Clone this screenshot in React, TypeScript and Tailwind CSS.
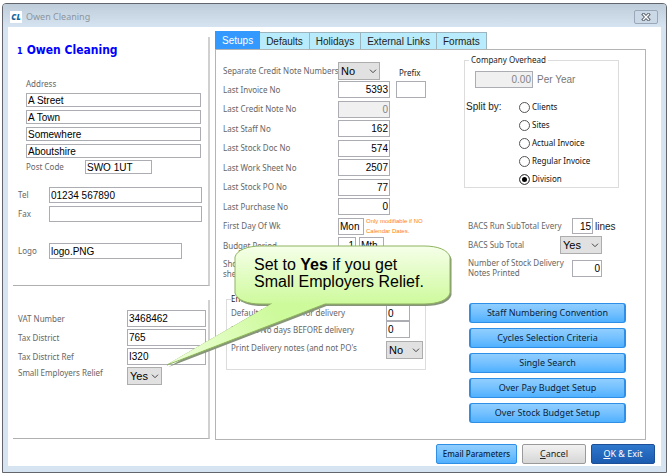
import type { ReactNode } from "react";

const labelCls = "text-[8px] leading-3 text-[#666]";
const boxCls =
  "min-w-0 border border-[#abadb3] bg-white px-px font-['Liberation_Sans',sans-serif] text-[10px] text-black outline-none disabled:bg-[#f0f0f0] disabled:text-[#838383]";
const arialCls = "font-['Liberation_Sans',sans-serif] text-[10px]";

const address = ["A Street", "A Town", "Somewhere", "Aboutshire"];

const tax = [
  { id: "vat", label: "VAT Number", value: "3468462" },
  { id: "district", label: "Tax District", value: "765" },
  { id: "districtRef", label: "Tax District Ref", value: "I320" },
];

const counters = [
  { id: "invoice", label: "Last Invoice No", value: "5393" },
  { id: "credit", label: "Last Credit Note No", value: "0", disabled: true },
  { id: "staff", label: "Last Staff No", value: "162" },
  { id: "stockDoc", label: "Last Stock Doc No", value: "574" },
  { id: "workSheet", label: "Last Work Sheet No", value: "2507" },
  { id: "stockPo", label: "Last Stock PO No", value: "77" },
  { id: "purchase", label: "Last Purchase No", value: "0" },
];

const tabs = ["Setups", "Defaults", "Holidays", "External Links", "Formats"];
const splits = ["Clients", "Sites", "Actual Invoice", "Regular Invoice", "Division"];
const actions = [
  "Staff Numbering Convention",
  "Cycles Selection Criteria",
  "Single Search",
  "Over Pay Budget Setup",
  "Over Stock Budget Setup",
];

function Picker({ id, value, className }: { id: string; value: string; className: string }) {
  return (
    <div className={`relative ${className}`}>
      <select
        id={id}
        defaultValue={value}
        className="block h-[18px] w-full appearance-none border border-[#adadad] bg-[#e1e1e1] pl-[2px] font-['Liberation_Sans',sans-serif] text-[11px] leading-4 text-black"
      >
        <option>Yes</option>
        <option>No</option>
      </select>
      <svg viewBox="0 0 8 5" className="pointer-events-none absolute right-[3px] top-[7px] h-[5px] w-2">
        <path d="M1 .7 4 3.7 7 .7" fill="none" stroke="#444" />
      </svg>
    </div>
  );
}

function Row({ id, label, children }: { id: string; label: string; children: ReactNode }) {
  return (
    <div className="flex items-center odd:h-[19px] even:h-5">
      <label htmlFor={id} className={`w-[115px] shrink-0 ${labelCls}`}>
        {label}
      </label>
      {children}
    </div>
  );
}

function TitleBar() {
  return (
    <header className="flex h-[23px] items-center justify-between bg-linear-to-b from-[#bfcddb] to-[#d6e4f2] pl-[7px] pr-2 pt-[3px]">
      <div className="flex items-center gap-1">
        <span className="flex h-3 w-3 items-center justify-center bg-white font-['Noto_Sans',sans-serif] text-[8px] font-black italic leading-3 text-[#15679c]">
          CL
        </span>
        <h1 className="text-[9px] text-[#8d959d]">Owen Cleaning</h1>
      </div>
      <button
        aria-label="Close"
        className="flex h-[14px] w-6 items-center justify-center rounded-[2px] border border-[#9aa7b8] bg-[#cbd8e6]"
      >
        <svg viewBox="0 0 10 8" className="h-2 w-[10px]">
          <path d="M2.5 1.5 7.5 6.5M7.5 1.5 2.5 6.5" stroke="#5c6470" strokeWidth="3.2" strokeLinecap="square" />
          <path d="M2.5 1.5 7.5 6.5M7.5 1.5 2.5 6.5" stroke="#fff" strokeWidth="1.3" strokeLinecap="square" />
        </svg>
      </button>
    </header>
  );
}

function CompanyPanel() {
  return (
    <div className="w-[197px] shrink-0">
      <section className="h-[249px] border-b border-r-2 border-b-[#b0b0b0] border-r-[#d0d0d0] pt-[5px]">
        <h2 className="flex items-baseline gap-1 pl-1 font-['DejaVu_Sans_Condensed','DejaVu_Sans',sans-serif] text-[12px] font-bold leading-4 text-[#0000ff]">
          <span className="text-[9px]">1</span>Owen Cleaning
        </h2>

        <div className="mt-[19px] flex flex-col pl-[13px]">
          <label htmlFor="address0" className={labelCls}>
            Address
          </label>
          <div className="mt-[3px] flex flex-col gap-[3px] pr-[7px]">
            {address.map((line, i) => (
              <input
                key={line}
                id={`address${i}`}
                aria-label={`Address line ${i + 1}`}
                className={`h-[14px] ${boxCls}`}
                defaultValue={line}
              />
            ))}
          </div>
          <div className="mt-[2px] flex items-center">
            <label htmlFor="postcode" className={`w-[59px] ${labelCls}`}>
              Post Code
            </label>
            <input id="postcode" className={`h-[14px] w-[67px] ${boxCls}`} defaultValue="SWO 1UT" />
          </div>
        </div>

        <div className="mt-[13px] flex flex-col gap-[3px] pl-[5px] pr-[6px]">
          <div className="flex items-center">
            <label htmlFor="tel" className={`w-[31px] shrink-0 ${labelCls}`}>
              Tel
            </label>
            <input id="tel" className={`h-4 flex-1 ${boxCls}`} defaultValue="01234 567890" />
          </div>
          <div className="flex items-center">
            <label htmlFor="fax" className={`w-[31px] shrink-0 ${labelCls}`}>
              Fax
            </label>
            <input id="fax" className={`h-4 flex-1 ${boxCls}`} />
          </div>
          <div className="mt-[18px] flex items-center">
            <label htmlFor="logo" className={`w-[31px] shrink-0 ${labelCls}`}>
              Logo
            </label>
            <input id="logo" className={`h-4 w-[133px] ${boxCls}`} defaultValue="logo.PNG" />
          </div>
        </div>
      </section>

      <section className="mt-[14px] h-[139px] border-b border-r-2 border-b-[#b0b0b0] border-r-[#d0d0d0] pl-[5px] pr-[2px] pt-[10px]">
        <div className="flex flex-col gap-[2px]">
          {tax.map((t) => (
            <div key={t.id} className="flex items-center">
              <label htmlFor={t.id} className={`w-[109px] shrink-0 ${labelCls}`}>
                {t.label}
              </label>
              <input id={t.id} className={`h-[17px] w-[79px] ${boxCls}`} defaultValue={t.value} />
            </div>
          ))}
          <div className="flex items-start">
            <label htmlFor="relief" className={`w-[109px] shrink-0 ${labelCls}`}>
              Small Employers Relief
            </label>
            <Picker id="relief" value="Yes" className="w-[35px]" />
          </div>
        </div>
      </section>
    </div>
  );
}

function SetupsColumn() {
  return (
    <div className="w-[212px] shrink-0 pt-3">
      <div className="flex h-[18px] items-center">
        <label htmlFor="separate" className={`w-[115px] shrink-0 overflow-hidden whitespace-nowrap ${labelCls}`}>
          Separate Credit Note Numbers
        </label>
        <Picker id="separate" value="No" className="w-[42px]" />
        <label htmlFor="prefix" className="ml-[19px] pt-1 text-[8px] leading-3 text-[#222]">
          Prefix
        </label>
      </div>

      <div>
        {counters.map((c) => (
          <Row key={c.id} id={c.id} label={c.label}>
            <input
              id={c.id}
              className={`h-[17px] w-[52px] text-right ${boxCls}`}
              defaultValue={c.value}
              disabled={c.disabled}
            />
            {c.id === "invoice" && <input id="prefix" className={`ml-[6px] h-[17px] w-[30px] ${boxCls}`} />}
          </Row>
        ))}
        <Row id="firstDay" label="First Day Of Wk">
          <input id="firstDay" className={`h-[17px] w-[26px] ${boxCls}`} defaultValue="Mon" />
          <p className="ml-[2px] whitespace-nowrap font-['Liberation_Sans',sans-serif] text-[6px] leading-[10px] text-[#ff7f0e]">
            Only modifiable if NO
            <br />
            Calendar Dates.
          </p>
        </Row>
        <Row id="budget" label="Budget Period">
          <input id="budget" className={`h-[17px] w-[18px] text-right ${boxCls}`} defaultValue="1" />
          <input
            aria-label="Budget period unit"
            className={`ml-[3px] h-[17px] w-[25px] ${boxCls}`}
            defaultValue="Mth"
          />
        </Row>
      </div>

      <p className="mt-1 w-12 text-[8px] leading-[10px] text-[#666]">
        Show
        <br />
        sheet
      </p>

      <fieldset className="ml-[3px] mt-[14px] h-[77px] w-[200px] border border-[#dcdcdc] pl-1">
        <legend className="text-[8px] leading-3 text-[#222]">Email</legend>
        <div className="flex items-center">
          <label htmlFor="daysFor" className={`w-[155px] ${labelCls}`}>
            Default No of days for delivery
          </label>
          <input id="daysFor" className={`h-4 w-6 ${boxCls}`} defaultValue="0" />
        </div>
        <div className="flex items-center">
          <label htmlFor="daysBefore" className={`w-[155px] ${labelCls}`}>
            Default No days BEFORE delivery
          </label>
          <input id="daysBefore" className={`h-[17px] w-6 ${boxCls}`} defaultValue="0" />
        </div>
        <div className="mt-[3px] flex items-start">
          <label htmlFor="printNotes" className={`w-[155px] pt-px ${labelCls}`}>
            Print Delivery notes (and not PO's
          </label>
          <Picker id="printNotes" value="No" className="w-[37px]" />
        </div>
      </fieldset>
    </div>
  );
}

function OptionsColumn() {
  return (
    <div className="w-[162px] shrink-0 pt-1">
      <fieldset className="h-[134px] w-[155px] border border-[#dcdcdc]">
        <legend className="ml-1 px-[2px] text-[8px] leading-3 text-[#222]">Company Overhead</legend>
        <div className="ml-[10px] mt-[5px] flex items-center gap-1">
          <input
            id="overhead"
            disabled
            defaultValue="0.00"
            className={`h-[17px] w-[58px] text-right ${boxCls}`}
          />
          <label htmlFor="overhead" className={`text-[#777] ${arialCls}`}>
            Per Year
          </label>
        </div>
        <div className="mt-[10px] flex" role="radiogroup" aria-labelledby="splitBy">
          <span id="splitBy" className={`w-[54px] pl-px leading-[18px] text-[#222] ${arialCls}`}>
            Split by:
          </span>
          <div>
            {splits.map((s) => (
              <label key={s} className="flex h-[18px] items-center gap-[2px] text-[8px] text-[#111]">
                <input
                  type="radio"
                  name="split"
                  defaultChecked={s === "Division"}
                  className="h-[11px] w-[11px] appearance-none rounded-full border border-[#555] bg-white checked:bg-black checked:shadow-[inset_0_0_0_2px_#fff]"
                />
                {s}
              </label>
            ))}
          </div>
        </div>
      </fieldset>

      <div className="mt-[30px] flex flex-col pl-1">
        <div className="flex items-center">
          <label htmlFor="runTotal" className={`w-[104px] ${labelCls}`}>
            BACS Run SubTotal Every
          </label>
          <input id="runTotal" className={`h-4 w-[21px] text-right ${boxCls}`} defaultValue="15" />
          <span className={`ml-[2px] text-[#222] ${arialCls}`}>lines</span>
        </div>
        <div className="mt-[2px] flex items-center">
          <label htmlFor="subTotal" className={`w-[92px] ${labelCls}`}>
            BACS Sub Total
          </label>
          <Picker id="subTotal" value="Yes" className="w-[42px]" />
        </div>
        <div className="mt-1 flex items-center">
          <label htmlFor="notes" className="w-[104px] text-[8px] leading-[10px] text-[#666]">
            Number of Stock Delivery Notes Printed
          </label>
          <input id="notes" className={`h-[17px] w-[30px] text-right ${boxCls}`} defaultValue="0" />
        </div>
      </div>

      <div className="mt-[25px] flex flex-col gap-[5px] pl-[5px]">
        {actions.map((a) => (
          <button
            key={a}
            className="h-5 rounded-[3px] border border-x-2 border-[#2f8fe6] bg-linear-to-b from-[#90ceff] via-[#74c1ff] to-[#4fb0ff] text-[9px] leading-4 text-[#0b1f38]"
          >
            {a}
          </button>
        ))}
      </div>
    </div>
  );
}

function Callout() {
  const bubble =
    "M74 12C76 5 86 1 100 1H263C277 1 287 5 289 12V48C287 55 277 59 263 59H164L6 120 111 59H100C86 59 76 55 74 48Z";

  return (
    <div className="absolute left-[158px] top-[241px] h-[126px] w-[292px]">
      <svg viewBox="0 0 292 126" className="absolute inset-0 h-full w-full">
        <defs>
          <linearGradient id="bubble" x1="0" y1="0" x2="0" y2="60" gradientUnits="userSpaceOnUse">
            <stop offset="0" stopColor="#f6ffea" />
            <stop offset="1" stopColor="#cdfa9b" />
          </linearGradient>
          <linearGradient id="tail" x1="110" y1="58" x2="10" y2="120" gradientUnits="userSpaceOnUse">
            <stop offset="0" stopColor="#cdfa9b" />
            <stop offset="1" stopColor="#efffdc" />
          </linearGradient>
        </defs>
        <path d={bubble} fill="#87967a" transform="translate(1.5 2)" />
        <path d={bubble} fill="url(#bubble)" stroke="#8fb35f" strokeLinejoin="round" />
        <path d="M112 58H163L7 119Z" fill="url(#tail)" />
      </svg>
      <p className="relative pl-[93px] pt-[11px] font-['Liberation_Sans',sans-serif] text-base leading-[17px] text-black">
        Set to <strong>Yes</strong> if you get
        <br />
        Small Employers Relief.
      </p>
    </div>
  );
}

export default function App() {
  return (
    <div className="bg-white px-[2px] pb-1 pt-[3px] font-['Noto_Sans',sans-serif]">
      <main className="relative overflow-hidden rounded-t-[4px] border border-[#62666c] bg-[#d6e4f2]">
        <TitleBar />

        <div className="mx-[5px] mb-[6px] bg-white pb-[2px]">
          <div className="flex gap-[5px] pl-[5px] pr-[15px] pt-1">
            <div className="flex pt-[6px]">
              <CompanyPanel />
            </div>

            <div className="min-w-0 flex-1">
              <nav role="tablist" className="flex items-end">
                {tabs.map((t, i) => (
                  <button
                    key={t}
                    role="tab"
                    aria-selected={i === 0}
                    className={
                      i === 0
                        ? `h-[18px] border border-[#3399ff] bg-[#3399ff] px-[6px] text-white ${arialCls}`
                        : `h-[17px] border border-b-0 border-l-0 border-[#9cb4bd] bg-[#b8ebfb] px-[6px] text-[#222] ${arialCls}`
                    }
                  >
                    {t}
                  </button>
                ))}
              </nav>
              <div role="tabpanel" className="flex justify-between border border-[#b4b4b4] pb-4 pl-[7px] pr-[19px]">
                <SetupsColumn />
                <OptionsColumn />
              </div>
            </div>
          </div>

          <footer className="mt-1 flex justify-end gap-[5px] pr-[6px]">
            <button className="h-5 w-[81px] whitespace-nowrap rounded-[2px] border border-[#2f8fe6] bg-linear-to-b from-[#90ceff] via-[#74c1ff] to-[#4fb0ff] text-[8px] font-medium text-[#0b1f38]">
              Email Parameters
            </button>
            <button className="h-5 w-16 rounded-[2px] border border-[#9a9a9a] bg-linear-to-b from-[#f2f2f2] to-[#d6d6d6] text-[9px] text-[#222]">
              <u>C</u>ancel
            </button>
            <button className="h-5 w-16 rounded-[2px] border border-[#1c4f97] bg-linear-to-b from-[#2f78cc] to-[#1a5bb0] text-[9px] text-white">
              <u>O</u>K &amp; Exit
            </button>
          </footer>
        </div>

        <Callout />
      </main>
    </div>
  );
}
